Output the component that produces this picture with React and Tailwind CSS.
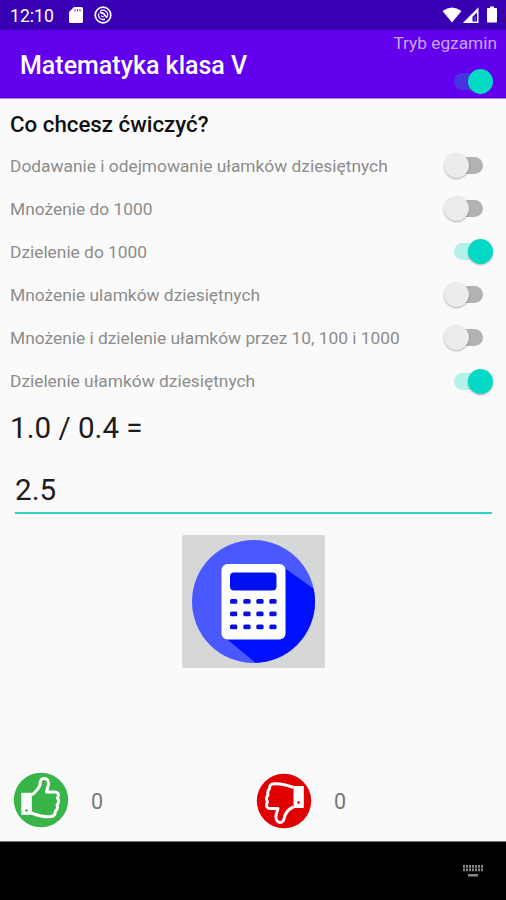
import { useState } from 'react';

const TOPICS = [
  { label: 'Dodawanie i odejmowanie ułamków dziesiętnych', on: false },
  { label: 'Mnożenie do 1000', on: false },
  { label: 'Dzielenie do 1000', on: true },
  { label: 'Mnożenie ulamków dziesiętnych', on: false },
  { label: 'Mnożenie i dzielenie ułamków przez 10, 100 i 1000', on: false },
  { label: 'Dzielenie ułamków dziesiętnych', on: true },
];

function Switch({ on, onChange, label, dark }) {
  const track = on ? (dark ? 'bg-[#4834de] ml-[11px]' : 'bg-[#b4f1ea] ml-[11px]') : 'bg-[#b2b2b2] ml-[5px]';
  const thumb = on ? 'left-[25px] bg-[#03dac5]' : 'left-[1px] bg-[#ececec]';
  const shadow = dark ? '' : 'shadow-[0_1px_2px_rgba(0,0,0,0.3)]';

  return (
    <button
      role="switch"
      aria-checked={on}
      aria-label={label}
      onClick={onChange}
      className="relative flex h-[25px] w-[50px] shrink-0 items-center"
    >
      <span className={`h-[17px] w-[35px] rounded-full ${track}`} />
      <span className={`absolute top-0 h-[25px] w-[25px] rounded-full ${shadow} ${thumb}`} />
    </button>
  );
}

function StatusBar() {
  return (
    <div className="flex h-[30px] items-center bg-[#3700b3] pr-2 pl-[10px] text-white">
      <span className="w-[59px] pt-[3px] text-[17.600px] leading-none">12:10</span>
      <svg width="14" height="16" viewBox="0 0 14 16">
        <path d="M5 0h7.500Q14 0 14 1.500v13Q14 16 12.500 16h-11Q0 16 0 14.500V5z" fill="#fff" />
        <path d="M6 2v2.600M8.500 2v2.600M11 2v2.600" stroke="#3700b3" strokeWidth="1.100" opacity="0.750" />
      </svg>
      <svg width="18" height="18" viewBox="0 0 18 18" fill="none" stroke="#fff" className="ml-[11px]">
        <circle cx="9" cy="9" r="7.800" strokeWidth="1.700" />
        <path d="M6.200 5.300a4.600 4.600 0 0 1 7 5.500M11 13.100a4.600 4.600 0 0 1-6.300-5.600" strokeWidth="1.200" />
        <path d="M5.800 6.300l3.700 1.200 3.500 4.300" strokeWidth="1.800" />
        <path d="M7 9.800l2.800 1.400" strokeWidth="1.200" />
      </svg>
      <svg width="56" height="18" viewBox="0 0 56 18" className="ml-auto">
        <path d="M0.500 5Q10 -2 19.500 5L10 16.500z" fill="#fff" />
        <path d="M36.500 1.300V17H20.800z" fill="#fff" />
        <path d="M35 6.500V15.500H30.500V10.800z" fill="#3700b3" />
        <path d="M33 10.500v4.500" stroke="#8a6cd4" strokeWidth="1" />
        <path d="M48 0.500h4V2h2.200q.8 0 .8.800v13q0 .8-.8.800h-8.400q-.8 0-.8-.8v-13q0-.8.8-.8H48z" fill="#fff" />
      </svg>
    </div>
  );
}

function CalculatorIcon() {
  return (
    <svg width="143" height="133" viewBox="0 0 143 133">
      <defs>
        <clipPath id="disc">
          <circle cx="71.500" cy="66.500" r="61.500" />
        </clipPath>
      </defs>
      <circle cx="71.500" cy="66.500" r="61.500" fill="#4958ff" />
      <path d="M101 32L143 62V133H80L41 101z" fill="#0010ff" clipPath="url(#disc)" />
      <rect x="39.500" y="29" width="64" height="75.500" rx="6" fill="#fff" />
      <rect x="48" y="37.500" width="46.500" height="18" rx="4" fill="#0010ef" />
      {[64, 76.500, 89.500].map((y) =>
        [48, 61.300, 74.300, 87.300].map((x) => (
          <rect key={`${x}-${y}`} x={x} y={y} width="7.300" height="4.800" rx="1.500" fill="#0a10e0" />
        ))
      )}
    </svg>
  );
}

function ThumbUpIcon() {
  return (
    <svg width="56" height="56" viewBox="0 0 56 56">
      <circle cx="28" cy="28" r="27.200" fill="#39b449" />
      <path d="M8.300 20.800h10.500v22H8.300z" fill="#fff" />
      <circle cx="13.500" cy="38.500" r="1.300" fill="#39b449" />
      <path
        d="M18.500 23C23 20 25.500 16.500 27 13C27 8.500 28 6.500 31 6.500C35 6.500 36 10 35.200 14L33.500 20H41.500C45.500 20 46.500 23.500 44.500 26C46 28 46 31 44 33C45 35.500 44 38 42.300 39C42.500 42.500 41 44.500 37 44.800C30 45.300 24 43 18.500 41"
        fill="none"
        stroke="#fff"
        strokeWidth="3"
        strokeLinejoin="round"
      />
    </svg>
  );
}

function ThumbDownIcon() {
  return (
    <svg width="56" height="56" viewBox="0 0 56 56" className="mt-[2px]">
      <circle cx="28" cy="28" r="27.200" fill="#e00000" />
      <path d="M37.500 13h10.300v22H37.500z" fill="#fff" />
      <circle cx="42.500" cy="29.500" r="1.300" fill="#e00000" />
      <path
        d="M37.500 14.500C31 12 25 10.500 18.500 10.800C14.500 11 13.200 13 13.400 16C11.800 17.500 11.300 19.500 12 22C10.300 24 10.300 27 11.500 29C9.500 32 10.500 35.500 14 35.500H22L20.300 41C19 45.500 20.500 49 24 49.500C27 49.500 28 47.500 28.500 44C30 39 32.500 36 37.500 34"
        fill="none"
        stroke="#fff"
        strokeWidth="3"
        strokeLinejoin="round"
      />
    </svg>
  );
}

export default function App() {
  const [exam, setExam] = useState(true);
  const [topics, setTopics] = useState(TOPICS);
  const [answer, setAnswer] = useState('2.5');

  const toggle = (index) =>
    setTopics(topics.map((topic, i) => (i === index ? { ...topic, on: !topic.on } : topic)));

  return (
    <div className="flex h-[900px] w-[506px] flex-col overflow-hidden bg-[#fafafa] font-[Roboto,sans-serif]">
      <StatusBar />

      <header className="flex h-[69px] justify-between border-b border-[#a98bea] bg-[#6200ee] pl-5">
        <h1 className="pt-[18px] text-[25px] leading-9 font-medium text-white">Matematyka klasa V</h1>
        <div className="flex flex-col items-end pr-[9px]">
          <span className="text-[17.300px] leading-[26px] text-[#c7a5f9]">Tryb egzamin</span>
          <div className="mt-[13px] mr-1">
            <Switch dark on={exam} onChange={() => setExam(!exam)} label="Tryb egzamin" />
          </div>
        </div>
      </header>

      <main className="flex grow flex-col">
        <h2 className="mt-[9px] pl-[10px] text-[22.300px] leading-8 font-medium text-[#111]">Co chcesz ćwiczyć?</h2>
        <div className="mt-1 flex flex-col">
          {topics.map((topic, i) => (
            <div key={topic.label} className="flex h-[43.100px] items-center justify-between pr-[13px] pl-[10px]">
              <span className="text-[17.350px] whitespace-nowrap text-[#8c8c8c]">{topic.label}</span>
              <Switch on={topic.on} onChange={() => toggle(i)} label={topic.label} />
            </div>
          ))}
        </div>

        <p className="mt-[5px] pl-[10px] text-[29.600px] leading-10 text-[#1c1c1c]">1.0 / 0.4 =</p>
        <input
          value={answer}
          onChange={(e) => setAnswer(e.target.value)}
          className="mr-[14px] ml-[15px] mt-[18px] h-[48px] border-b-2 border-[#2bd3c3] pt-[2px] text-[29.600px] text-[#1c1c1c] outline-none"
        />

        <button className="mt-[21px] self-center rounded-[2px] bg-[#d6d7d7]">
          <CalculatorIcon />
        </button>

        <div className="mt-auto mb-[12px] grid grid-cols-2 text-[21.500px] text-[#777]">
          <div className="flex items-center gap-[22px] pl-[13px]">
            <ThumbUpIcon />
            <span className="pt-[4px]">0</span>
          </div>
          <div className="flex items-center gap-[22px] pl-[3px]">
            <ThumbDownIcon />
            <span className="pt-[4px]">0</span>
          </div>
        </div>
      </main>

      <nav className="flex h-[59px] items-start justify-end border-t border-[#777] bg-black pt-[23px] pr-[23px]">
        <svg width="20" height="12" viewBox="0 0 20 12" fill="#888">
          {[0, 3.500].map((y) =>
            [0, 3, 6, 9, 12, 15, 18].map((x) => <rect key={`${x}-${y}`} x={x} y={y} width="2" height="2.800" />)
          )}
          <rect x="5" y="9" width="10" height="2.500" />
        </svg>
      </nav>
    </div>
  );
}
